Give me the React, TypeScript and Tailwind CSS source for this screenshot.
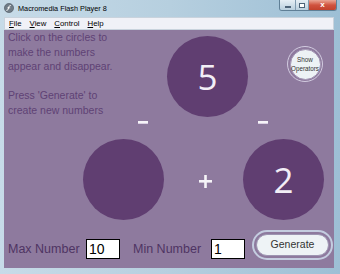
import React from "react";

const sans = { fontFamily: '"Liberation Sans", Arial, sans-serif' };

function Circle({ value }: { value?: string }) {
  return (
    <div className="w-[81px] h-[81px] rounded-full bg-[#603e71] flex items-center justify-center shrink-0">
      {value && (
        <span className="text-[#f2eef6] text-[35px] leading-none font-normal" style={{ fontFamily: '"Open Sans", "DejaVu Sans", sans-serif' }}>
          {value}
        </span>
      )}
    </div>
  );
}

function Minus() {
  return <div className="w-[10px] h-[3px] bg-[#f6f4f8] border-b border-[#d9cfe2] shrink-0" />;
}

export default function App() {
  return (
    <div className="w-[340px] h-[274px] flex flex-col bg-gradient-to-r from-[#c7dbe8] via-[#b6cfdf] to-[#9dbfd5] overflow-hidden" style={sans}>
      {/* title bar */}
      <div className="h-[17px] flex items-start shrink-0">
        <svg className="ml-[4px] mt-[3px]" width="10" height="10" viewBox="0 0 10 10">
          <circle cx="5" cy="5" r="4.6" fill="#6f7b86" stroke="#4d5862" strokeWidth="0.6" />
          <path d="M6.8 2.6 C5.4 2.4 4.8 3.4 4.5 5 C4.2 6.6 3.6 7.6 2.4 7.4" fill="none" stroke="#fff" strokeWidth="1" />
          <path d="M3.4 4.8 H6.2" stroke="#fff" strokeWidth="0.8" />
        </svg>
        <span className="ml-[4px] mt-[4px] text-[7.3px] leading-[9px] text-black whitespace-nowrap">Macromedia Flash Player 8</span>
        <div className="ml-auto mr-[3px] flex h-[11px] rounded-b-[3px] overflow-hidden border border-t-0 border-[#5f7f96]">
          <div className="w-[16px] h-full bg-gradient-to-b from-[#e6eff5] to-[#b9cfdd] border-r border-[#7f9bb0] flex items-center justify-center">
            <div className="w-[6px] h-[2px] bg-white border border-[#4d6478] mt-[3px]" />
          </div>
          <div className="w-[13px] h-full bg-gradient-to-b from-[#e6eff5] to-[#b9cfdd] border-r border-[#7f9bb0] flex items-center justify-center">
            <div className="w-[6px] h-[5px] border border-[#4d6478] bg-white" />
          </div>
          <div className="w-[27px] h-full bg-gradient-to-b from-[#e9a595] via-[#d0533f] to-[#c2412c] flex items-center justify-center">
            <span className="text-white text-[8px] leading-none font-bold">x</span>
          </div>
        </div>
      </div>

      {/* menu bar */}
      <div className="h-[13px] ml-[4px] mr-[6px] bg-[#f0f1f7] border border-[#c9d3dd] flex items-center text-[7.8px] text-black shrink-0">
        <span className="ml-[4px]"><u>F</u>ile</span>
        <span className="ml-[8px]"><u>V</u>iew</span>
        <span className="ml-[8px]"><u>C</u>ontrol</span>
        <span className="ml-[8px]"><u>H</u>elp</span>
      </div>

      {/* stage */}
      <div className="flex-1 ml-[4px] mr-[6px] mb-[6px] bg-[#8e7a9e] flex flex-col">
        <div className="flex items-start">
          <div className="w-[163px] shrink-0 pl-[4px] text-[10.5px] leading-[14.5px] text-[#5f4275]">
            <p>Click on the circles to</p>
            <p>make the numbers</p>
            <p>appear and disappear.</p>
            <p>&nbsp;</p>
            <p>Press 'Generate' to</p>
            <p>create new numbers</p>
          </div>
          <div className="mt-[6px]">
            <Circle value="5" />
          </div>
          <div className="ml-[39px] mt-[16px] w-[36px] h-[36px] rounded-full border-[1.5px] border-[#d2cbe0] p-[1.5px] shrink-0">
            <div className="w-full h-full rounded-full bg-[#edf2f5] border border-[#a396b4] flex flex-col items-center justify-center text-[6.3px] leading-[9px] text-[#333]">
              <span>Show</span>
              <span>Operators</span>
            </div>
          </div>
        </div>

        <div className="flex mt-[4px] pl-[134px]">
          <Minus />
          <div className="ml-[110px]">
            <Minus />
          </div>
        </div>

        <div className="flex items-center mt-[15px] pl-[79px]">
          <Circle />
          <svg className="ml-[35px] mt-[3px] shrink-0" width="13" height="13" viewBox="0 0 13 13">
            <rect x="0" y="5" width="13" height="2.6" fill="#f6f4f8" />
            <rect x="5.2" y="0" width="2.6" height="13" fill="#f6f4f8" />
          </svg>
          <div className="ml-[31px]">
            <Circle value="2" />
          </div>
        </div>

        <div className="flex items-start mt-[10px] pl-[4px]">
          <span className="mt-[9px] h-[20px] leading-[20px] text-[12.5px] text-[#4e3463] w-[75px] shrink-0 whitespace-nowrap">Max Number</span>
          <div className="mt-[9px] ml-[3px] w-[34px] h-[20px] shrink-0 bg-white border border-black pl-[2px] text-[14px] leading-[18px] text-black">10</div>
          <span className="mt-[9px] ml-[13px] h-[20px] leading-[20px] text-[12.5px] text-[#4e3463] w-[67px] shrink-0 whitespace-nowrap">Min Number</span>
          <div className="mt-[9px] ml-[11px] w-[34px] h-[20px] shrink-0 bg-white border border-black pl-[2px] text-[14px] leading-[18px] text-black">1</div>
          <div className="ml-[7px] w-[81px] h-[30px] shrink-0 rounded-full border-2 border-[#c4cde0] p-[2px] flex">
            <div className="flex-1 rounded-full bg-[#eef3f6] border border-[#9d95b2] flex items-center justify-center text-[10.5px] text-[#333]">
              Generate
            </div>
          </div>
        </div>
      </div>
    </div>
  );
}
